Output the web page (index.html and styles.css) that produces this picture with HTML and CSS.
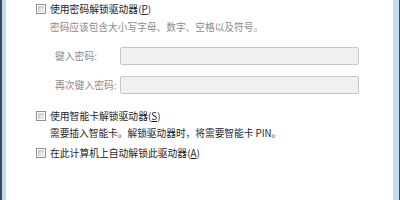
FILE: index.html
```html
<!DOCTYPE html>
<html lang="zh-CN">
<head>
    <meta charset="UTF-8">
    <title>BitLocker 驱动器加密</title>
    <link rel="stylesheet" href="styles.css">
</head>
<body>
    <div class="frame">
        <div class="panel">
            <div class="option first">
                <span class="check"></span>
                <span>使用密码解锁驱动器(<u>P</u>)</span>
            </div>
            <p class="hint">密码应该包含大小写字母、数字、空格以及符号。</p>

            <div class="field first-field">
                <label for="pwd">键入密码:</label>
                <input type="password" id="pwd" disabled>
            </div>
            <div class="field">
                <label for="pwd2">再次键入密码:</label>
                <input type="password" id="pwd2" disabled>
            </div>

            <div class="option second">
                <span class="check"></span>
                <span>使用智能卡解锁驱动器(<u>S</u>)</span>
            </div>
            <p class="desc">需要插入智能卡。解锁驱动器时，将需要智能卡 PIN。</p>

            <div class="option third">
                <span class="check"></span>
                <span>在此计算机上自动解锁此驱动器(<u>A</u>)</span>
            </div>
        </div>
    </div>
</body>
</html>
```

FILE: styles.css
```css
html, body {
    margin: 0;
    height: 100%;
    background: #fff;
}
.frame {
    height: 200px;
    border-left: 2px solid #3d4b5e;
    border-right: 1px solid #3d4b5e;
    box-sizing: border-box;
}
.panel {
    height: 100%;
    border-left: 4px solid #c9dbf1;
    border-right: 6px solid #c9dbf1;
    padding: 3px 0 0 30px;
    box-sizing: border-box;
    font-family: "Noto Sans CJK SC", "Noto Sans", sans-serif;
    font-size: 9.8px;
    color: #1e1e1e;
}
.option {
    display: flex;
    align-items: center;
    height: 12px;
    line-height: 12px;
}
.option u {
    text-decoration-thickness: 1px;
    text-underline-offset: 1px;
}
.check {
    width: 10px;
    height: 10px;
    box-sizing: border-box;
    margin-right: 4px;
    border: 1px solid #8e8f8f;
    background: #eeeeee;
    box-shadow: inset 0 0 0 1px #fff, inset 1px 1px 2px 2px #d0d0d0;
}
.second {
    margin-top: 16px;
}
.third {
    margin-top: 8px;
}
.hint, .desc {
    margin: 0 0 0 14px;
    line-height: 12px;
    font-size: 9.7px;
}
.hint {
    margin-top: 6px;
    color: #8c8c8c;
}
.desc {
    margin-top: 5px;
}
.field {
    display: flex;
    align-items: center;
    margin-left: 19px;
    margin-top: 11px;
    height: 18px;
}
.first-field {
    margin-top: 14px;
}
label {
    width: 65px;
    color: #8c8c8c;
}
input[type="password"] {
    width: 239px;
    height: 18px;
    box-sizing: border-box;
    margin: 0;
    padding: 0;
    border: 1px solid #c6c6c6;
    border-radius: 2px;
    background: #f0f0f0;
}
```
